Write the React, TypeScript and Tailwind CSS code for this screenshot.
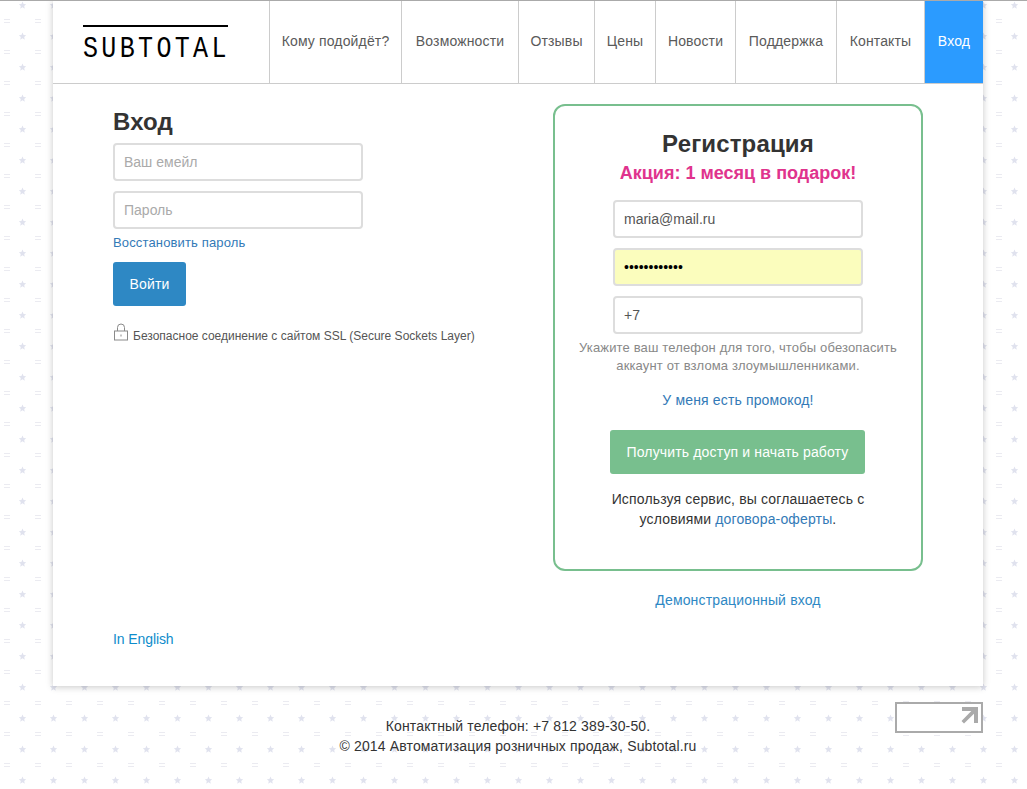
import React from 'react';

const NAV = [
  { label: 'Кому подойдёт?', width: 'w-[132px]' },
  { label: 'Возможности', width: 'w-[117px]' },
  { label: 'Отзывы', width: 'w-[76px]' },
  { label: 'Цены', width: 'w-[61px]' },
  { label: 'Новости', width: 'w-[80px]' },
  { label: 'Поддержка', width: 'w-[101px]' },
  { label: 'Контакты', width: 'w-[88px]' },
];

const inputBase =
  'block w-[250px] h-[38px] border-2 border-[#dddddd] rounded-[4px] px-[9px] text-[14px] tracking-normal text-[#555555] placeholder:text-[#aaaaaa] outline-none';

const BackgroundPattern = () => (
  <svg className="absolute inset-0 w-full h-full" aria-hidden="true">
    <defs>
      <pattern id="stars" x="0" y="0" width="31" height="31" patternUnits="userSpaceOnUse">
        <polygon
          points="22.5,1.5 23.6,4 26.2,4.2 24.2,6 24.8,8.7 22.5,7.3 20.2,8.7 20.8,6 18.8,4.2 21.4,4"
          fill="#e0e2ee"
        />
        <rect x="4" y="19" width="6" height="1" fill="#ebebf1" />
        <rect x="4" y="22" width="6" height="1" fill="#ebebf1" />
      </pattern>
    </defs>
    <rect width="100%" height="100%" fill="url(#stars)" />
  </svg>
);

const LockIcon = () => (
  <svg width="14" height="18" viewBox="0 0 14 18" fill="none" stroke="#8a8a8a" strokeWidth="1" className="shrink-0">
    <path d="M3.5 8V4.5a3.5 3.5 0 0 1 7 0V8" />
    <rect x="0.5" y="8" width="13" height="9" />
    <path d="M7 11.5v2" />
  </svg>
);

const App: React.FC = () => {
  return (
    <div className="relative h-[789px] overflow-hidden bg-white font-['Liberation_Sans',Arial,sans-serif] text-[14px] tracking-[0.15px] text-[#333333]">
      <BackgroundPattern />
      <div className="absolute top-0 left-0 w-full h-px bg-[#aaaaaa] z-10" />

      <div className="relative ml-[53px] w-[930px] h-[686px] bg-white shadow-[0_1px_7px_rgba(0,0,0,0.22)]">
        {/* Header */}
        <header className="flex h-[84px] border-b border-[#cccccc]">
          <div className="w-[217px] shrink-0 border-r border-[#cccccc] pl-[30px] pt-[25px]">
            <div className="w-[145px] border-t-2 border-black pt-[9px]">
              <div className="font-['Liberation_Mono',monospace] text-[25px] leading-[27px] tracking-[3.35px] whitespace-nowrap text-black scale-y-[1.15]">
                SUBTOTAL
              </div>
            </div>
          </div>
          {NAV.map((item) => (
            <a key={item.label} className={`${item.width} shrink-0 border-r border-[#cccccc] flex items-center justify-center text-[#5a5a5a]`}>
              {item.label}
            </a>
          ))}
          <a className="w-[58px] shrink-0 flex items-center justify-center bg-[#2b9bff] text-white">Вход</a>
        </header>

        <main className="flex pl-[60px] pt-5">
          {/* Login */}
          <section className="w-[440px] shrink-0">
            <h2 className="text-[24px] leading-[36px] font-bold text-[#333333]">Вход</h2>
            <input className={`${inputBase} mt-[3px]`} placeholder="Ваш емейл" />
            <input className={`${inputBase} mt-[10px]`} placeholder="Пароль" />
            <a className="block mt-[4px] leading-[20px] text-[13px] text-[#337ab7]">Восстановить пароль</a>
            <button className="block mt-[9px] w-[73px] h-[44px] rounded-[3px] bg-[#2e88c4] text-white text-[14px]">Войти</button>
            <div className="flex items-start gap-[5px] mt-[17px] ml-px text-[12px] tracking-normal text-[#555555]">
              <LockIcon />
              <span className="leading-[14px] mt-[6px]">Безопасное соединение с сайтом SSL (Secure Sockets Layer)</span>
            </div>
            <a className="block mt-[286px] leading-[20px] tracking-[-0.1px] text-[#0e8ccb]">In English</a>
          </section>

          {/* Registration */}
          <section className="w-[370px] shrink-0 flex flex-col items-center">
            <div className="w-full h-[467px] border-2 border-[#78bf8e] rounded-[12px] flex flex-col items-center pt-[22px]">
              <h2 className="text-[24px] leading-[32px] font-bold text-[#333333]">Регистрация</h2>
              <div className="mt-px text-[18px] leading-[24px] font-bold tracking-normal text-[#e0338d]">Акция: 1 месяц в подарок!</div>
              <input className={`${inputBase} mt-[15px]`} defaultValue="maria@mail.ru" />
              <input className={`${inputBase} mt-[10px] bg-[#fbfdbd] text-[12px] tracking-[0.7px] text-black`} type="password" defaultValue="mariamaria12" />
              <input className={`${inputBase} mt-[10px]`} defaultValue="+7" />
              <p className="mt-[5px] w-[340px] text-center text-[13px] leading-[18px] text-[#888888]">
                Укажите ваш телефон для того, чтобы обезопасить аккаунт от взлома злоумышленниками.
              </p>
              <a className="mt-[15px] leading-[20px] text-[#337ab7]">У меня есть промокод!</a>
              <button className="mt-5 -ml-px w-[255px] h-[44px] rounded-[3px] bg-[#78bf8e] text-white text-[14px]">Получить доступ и начать работу</button>
              <div className="mt-[15px] text-center leading-[20px] text-[#333333]">
                <div>Используя сервис, вы соглашаетесь с</div>
                <div>
                  условиями <a className="text-[#337ab7]">договора-оферты</a>.
                </div>
              </div>
            </div>
            <a className="mt-[19px] leading-[20px] text-[#2e88c4]">Демонстрационный вход</a>
          </section>
        </main>
      </div>

      {/* Footer */}
      <footer className="relative ml-[53px] w-[930px] grid grid-cols-[1fr_auto_1fr] pt-4">
        <div />
        <div className="text-center pt-[14px] leading-[20px] text-[#333333]">
          <div>Контактный телефон: +7 812 389-30-50.</div>
          <div>© 2014 Автоматизация розничных продаж, Subtotal.ru</div>
        </div>
        <div className="justify-self-end w-[88px] h-[31px] border-2 border-[#aaaaaa] bg-white flex justify-end items-start pt-[3px] pr-[3px]">
          <svg width="17" height="17" viewBox="0 0 17 17" fill="#aaaaaa">
            <path d="M1 0h16v16h-4V6.8L3 16.5 0.5 14 10.300 4H1z" />
          </svg>
        </div>
      </footer>
    </div>
  );
};

export default App;
